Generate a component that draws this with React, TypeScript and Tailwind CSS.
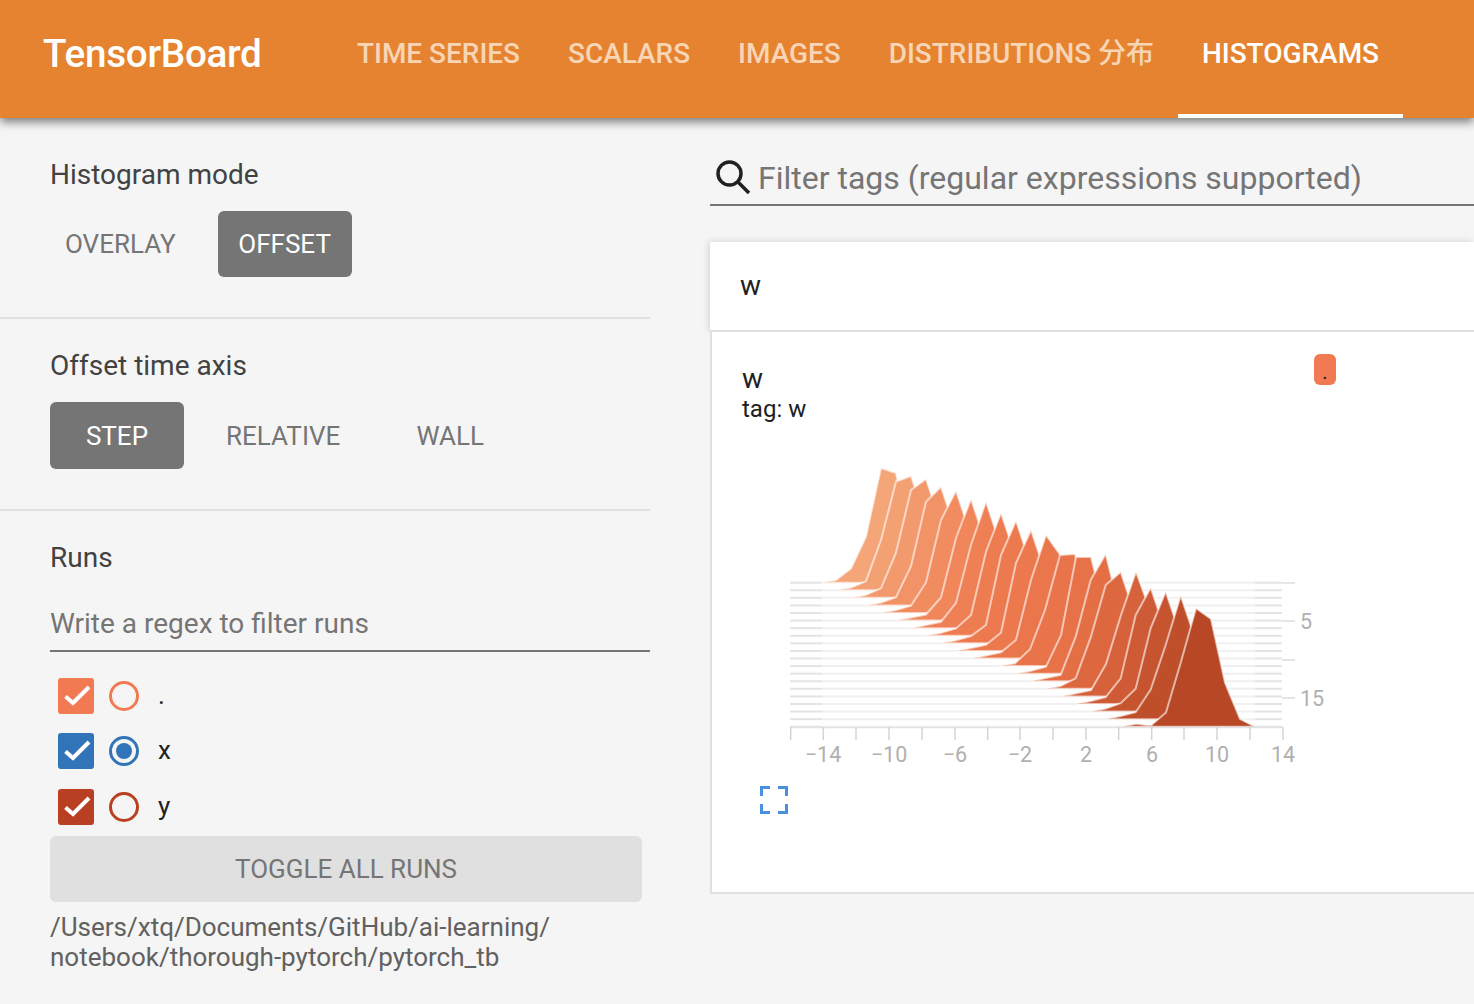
import React from "react";

const FONT = "font-['Roboto','Noto_Sans_CJK_SC',sans-serif]";

const tabs = ["TIME SERIES", "SCALARS", "IMAGES", "DISTRIBUTIONS 分布", "HISTOGRAMS"];

// [peak x, y one bin before the peak, peak y, y one bin after, height ratio two bins before, three bins before]
const slices: number[][] = [
  [896, 468, 473, 548, 0.42, 0.13],
  [911, 481.6, 476, 521, 0.44, 0.08],
  [926, 490, 479, 524, 0.38, 0.08],
  [941, 501.7, 486.7, 532, 0.33, 0.07],
  [956, 520, 490.7, 536, 0.25, 0.06],
  [971, 538, 499, 544, 0.19, 0.05],
  [986, 545, 501.7, 547, 0.2, 0.05],
  [1001, 551.7, 513, 558, 0.17, 0.06],
  [1016, 555, 520.7, 566, 0.15, 0.06],
  [1031, 563, 530, 575, 0.15, 0.05],
  [1046, 580, 535, 556, 0.15, 0.05],
  [1075, 555, 554, 613, 0.5, 0.15],
  [1091, 557, 557, 617, 0.33, 0.06],
  [1105.7, 580, 554, 615, 0.35, 0.05],
  [1120.7, 585, 572, 617, 0.44, 0.09],
  [1136, 615, 571.7, 613, 0.26, 0.05],
  [1150.7, 615, 587.7, 632, 0.22, 0.06],
  [1165.7, 628, 591.7, 636, 0.19, 0.07],
  [1180.7, 645, 595.7, 640, 0.24, 0.056],
  [1196, 661.7, 608.3, 619, 0.12, 0.01],
];

const xTicks = [790.7, 823.3, 856, 889, 922, 955, 987.7, 1020, 1053, 1086, 1118.7, 1151.7, 1184, 1217, 1250, 1283];
const xLabels = [
  ["−14", 823],
  ["−10", 889],
  ["−6", 955],
  ["−2", 1020],
  ["2", 1086],
  ["6", 1152],
  ["10", 1217],
  ["14", 1283],
] as const;

const stops = [
  [244, 166, 121],
  [239, 125, 82],
  [231, 113, 70],
  [183, 71, 37],
];

function sliceColor(i: number) {
  const t = (i / 19) * 3;
  const k = Math.min(2, Math.floor(t));
  const f = t - k;
  const c = stops[k].map((v, n) => Math.round(v + (stops[k + 1][n] - v) * f));
  return `rgb(${c[0]},${c[1]},${c[2]})`;
}

function slicePoints(row: number[], i: number) {
  const [p, prev, peak, next, a2, a3] = row;
  const base = 582.7 + 7.58 * i;
  const h = base - peak;
  const left: number[][] = [
    [p - 75, base],
    [p - 60, base - 0.025 * h],
    [p - 45, base - a3 * h],
    [p - 30, base - a2 * h],
    [p - 15, prev],
    [p, peak],
    [p + 15, next],
  ];
  const right =
    i === 19
      ? [
          [p + 29, base - 44],
          [p + 44, base - 7.6],
          [p + 59, base],
        ]
      : [
          [p + 30, base - 0.25 * h],
          [p + 45, base - 0.05 * h],
          [p + 60, base],
        ];
  return [...left, ...right].map((q) => q.join(",")).join(" ");
}

function HistogramChart() {
  return (
    <svg width="560" height="330" viewBox="770 450 560 330" className="block">
      {slices.map((row, i) => {
        const y = 582.7 + 7.58 * i;
        return (
          <g key={i}>
            <line x1="790" x2="822" y1={y} y2={y} stroke="#e4e4e4" strokeWidth="2" />
            <line x1="822" x2="1255" y1={y} y2={y} stroke="#f0f0f0" strokeWidth="2" />
            <line x1="1255" x2="1282" y1={y} y2={y} stroke="#e4e4e4" strokeWidth="2" />
            <polygon points={slicePoints(row, i)} fill={sliceColor(i)} stroke="#ffffff" strokeOpacity="0.6" strokeWidth="2" />
          </g>
        );
      })}
      <line x1="790" x2="1283" y1="727.5" y2="727.5" stroke="#e3e3e3" strokeWidth="1.5" />
      {xTicks.map((x) => (
        <line key={x} x1={x} x2={x} y1="727" y2="740" stroke="#d4d4d4" strokeWidth="1.5" />
      ))}
      {xLabels.map(([t, x]) => (
        <text key={t} x={x} y="762" textAnchor="middle" fontSize="21.5" fill="#b0b0b0" fontFamily="Roboto, sans-serif">
          {t}
        </text>
      ))}
      {[583, 621, 660, 698].map((y) => (
        <line key={y} x1="1282" x2="1295" y1={y} y2={y} stroke="#dcdcdc" strokeWidth="1.5" />
      ))}
      <text x="1300" y="629" fontSize="21.5" fill="#b0b0b0" fontFamily="Roboto, sans-serif">5</text>
      <text x="1300" y="706" fontSize="21.5" fill="#b0b0b0" fontFamily="Roboto, sans-serif">15</text>
    </svg>
  );
}

function RunRow({ label, color, selected }: { label: string; color: string; selected?: boolean }) {
  return (
    <div className="flex h-[55.5px] items-center pl-2">
      <div className="flex h-9 w-9 items-center justify-center rounded-[3px]" style={{ backgroundColor: color }}>
        <svg width="30" height="24" viewBox="0 0 30 24" fill="none">
          <path d="M4.5 12.5l7.5 6.5L28 3" stroke="#fff" strokeWidth="4" />
        </svg>
      </div>
      <div
        className="ml-[15px] flex h-[30px] w-[30px] items-center justify-center rounded-full border-[3px]"
        style={{ borderColor: color }}
      >
        {selected && <div className="h-4 w-4 rounded-full" style={{ backgroundColor: color }} />}
      </div>
      <span className="mb-[2px] ml-[19px] text-[26px] leading-[30px] text-[#212121]">{label}</span>
    </div>
  );
}

export default function App() {
  return (
    <div className={`${FONT} h-[1004px] w-full overflow-hidden bg-[#f5f5f5]`}>
      <header className="relative z-10 flex h-[118px] bg-[#e68330] shadow-[0_4px_9px_rgba(0,0,0,0.5)]">
        <div className="mb-[10px] ml-[43px] w-[290px] self-center text-[38.7px] font-medium leading-[44px] tracking-[-0.3px] text-white">
          TensorBoard
        </div>
        <nav className="flex">
          {tabs.map((t) => (
            <div
              key={t}
              className={`flex items-center px-6 text-[27.95px] font-medium ${
                t === "HISTOGRAMS" ? "border-b-4 border-white pb-[6px] text-white" : "pb-[10px] text-[#f8d5b5]"
              }`}
            >
              {t}
            </div>
          ))}
        </nav>
      </header>

      <div className="flex">
        <aside className="w-[650px] shrink-0 text-[#424242]">
          <section className="h-[201px] border-b-2 border-[#e0e0e0] px-[50px] pt-[39px]">
            <h3 className="text-[28px] font-normal leading-9">Histogram mode</h3>
            <div className="mt-[18px] -ml-[6px] flex gap-[21px] text-[26px] text-[#757575]">
              <button className="h-[66px] rounded-md px-[21px]">OVERLAY</button>
              <button className="h-[66px] min-w-[134px] rounded-md bg-[#757575] text-white">OFFSET</button>
            </div>
          </section>
          <section className="h-[192px] border-b-2 border-[#e0e0e0] px-[50px] pt-[29px]">
            <h3 className="text-[28px] font-normal leading-9">Offset time axis</h3>
            <div className="mt-[18px] flex gap-[21px] text-[26px] text-[#757575]">
              <button className="h-[67px] min-w-[134px] rounded-md bg-[#757575] pt-[2px] text-white">STEP</button>
              <button className="h-[67px] rounded-md px-[21px] pt-[2px]">RELATIVE</button>
              <button className="h-[67px] min-w-[136px] rounded-md pt-[2px]">WALL</button>
            </div>
          </section>
          <section className="pl-[50px] pt-[29px]">
            <h3 className="text-[28px] font-normal leading-9">Runs</h3>
            <div className="mt-[30px] h-[46px] border-b-2 border-[#757575] text-[28px] leading-9 text-[#757575]">
              Write a regex to filter runs
            </div>
            <div className="mt-[16px]">
              <RunRow label="." color="#f27a52" />
              <RunRow label="x" color="#3274b8" selected />
              <RunRow label="y" color="#b93f22" />
            </div>
            <button className="mt-[1px] h-[66px] w-[592px] rounded-md bg-[#e0e0e0] pt-[2px] text-[26px] text-[#757575]">
              TOGGLE ALL RUNS
            </button>
            <p className="mt-[10px] w-[540px] text-[26px] leading-[30px] text-[#616161]">
              /Users/xtq/Documents/GitHub/ai-learning/
              <br />
              notebook/thorough-pytorch/pytorch_tb
            </p>
          </section>
        </aside>

        <main className="ml-[60px] min-w-0 flex-1">
          <div className="mt-[22px] flex h-[66px] items-center border-b-2 border-[#757575] pl-[5px] pt-[10px]">
            <svg width="36" height="36" viewBox="0 0 36 36" fill="none" className="shrink-0">
              <circle cx="14.5" cy="14.5" r="11.5" stroke="#212121" strokeWidth="3.5" />
              <path d="M23 23L34 34" stroke="#212121" strokeWidth="3.5" />
            </svg>
            <span className="ml-[7px] mt-[2px] whitespace-nowrap text-[32px] leading-10 text-[#757575]">
              Filter tags (regular expressions supported)
            </span>
          </div>

          <div className="mt-9 flex h-[90px] items-center border-b-2 border-[#e0e0e0] bg-white pl-[30px] text-[28px] text-[#212121] shadow-[-2px_-1px_6px_rgba(0,0,0,0.12)]">
            w
          </div>

          <div className="relative h-[562px] border-b-2 border-l-2 border-[#e0e0e0] bg-white">
            <div className="pl-[30px] pt-[31px] text-[#212121]">
              <div className="text-[28px] leading-[32px]">w</div>
              <div className="text-[24px] leading-[28px]">tag: w</div>
            </div>
            <div className="absolute left-[602px] top-[22px] flex h-[31px] w-[22px] items-center justify-center rounded-md bg-[#f27a52] pt-1 text-[20px] leading-none text-[#212121]">
              .
            </div>
            <div className="ml-[58px] mt-[27px]">
              <HistogramChart />
            </div>
            <svg width="28" height="28" viewBox="0 0 28 28" fill="none" className="absolute left-[48px] top-[454px]">
              <path d="M1.5 10V1.5H10M18 1.5H26.5V10M26.5 18V26.5H18M10 26.5H1.5V18" stroke="#4a90e2" strokeWidth="3" />
            </svg>
          </div>
        </main>
      </div>
    </div>
  );
}
